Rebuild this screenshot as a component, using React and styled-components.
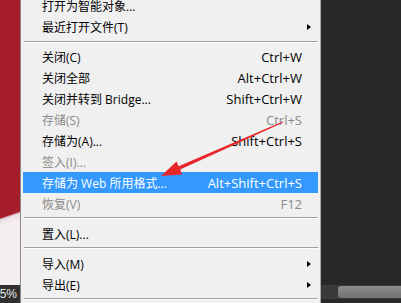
import React from 'react';
import styled, { createGlobalStyle } from 'styled-components';

const GlobalStyle = createGlobalStyle`
    html, body {
        margin: 0;
        padding: 0;
        overflow: hidden;
        background: #282828;
    }
`;

const Screen = styled.div`
    position: relative;
    display: flex;
    width: 401px;
    height: 303px;
    overflow: hidden;
    font-family: "Open Sans", "Noto Sans CJK SC", sans-serif;
    font-size: 12px;
`;

const LeftStrip = styled.div`
    width: 20px;
    display: flex;
    flex-direction: column;
`;
const Photo = styled.div`
    flex: 1;
    background: linear-gradient(161deg, #a51d2b 0 206px, #e9dde3 208px, #f4eef2 214px);
`;
const StatusBar = styled.div`
    height: 18px;
    background: #303030;
    color: #e6e6e6;
    display: flex;
    align-items: center;
    justify-content: flex-end;
    padding-right: 3px;
    font-family: "Liberation Sans", sans-serif;
    font-size: 12px;
`;

const Menu = styled.div`
    width: 299px;
    background: #f0f0f0;
    border-left: 1px solid #8a8a8a;
    border-right: 1px solid #a8a8a8;
`;
const List = styled.div`
    margin-top: -5px;
`;
const Row = styled.div`
    display: flex;
    align-items: center;
    height: 21px;
    margin: 0 2px;
    padding-left: 19px;
    background: ${p => (p.$active ? '#3399ff' : 'transparent')};
    color: ${p => (p.$active ? '#fff' : p.$disabled ? '#8a8a8a' : '#000')};
    white-space: nowrap;
`;
const Label = styled.span`
    flex: 1;
    padding-top: 1px;
`;
const Shortcut = styled.span`
    padding-top: 1px;
    font-size: 13px;
`;
const ArrowCell = styled.span`
    width: 16px;
    display: flex;
    align-items: center;
    padding-left: 5px;
    box-sizing: border-box;
`;
const SubArrow = styled.span`
    width: 0;
    height: 0;
    border-top: 3.5px solid transparent;
    border-bottom: 3.5px solid transparent;
    border-left: 4px solid #000;
`;
const Separator = styled.div`
    height: 9px;
    box-sizing: border-box;
    padding-top: ${p => p.$gap}px;
    margin: 0 2px 0 3px;
    &::after {
        content: '';
        display: block;
        border-top: 1px solid #a0a0a0;
        border-bottom: 1px solid #fdfdfd;
    }
`;

const RightPane = styled.div`
    flex: 1;
    background: #282828;
    display: flex;
    flex-direction: column;
    justify-content: flex-end;
`;
const ScrollTrack = styled.div`
    height: 14px;
    margin-bottom: 4px;
    background: #3a3a3a;
    display: flex;
    align-items: center;
    padding-left: 17px;
`;
const ScrollThumb = styled.div`
    flex: 1;
    height: 12px;
    border-radius: 3px 0 0 3px;
    background: linear-gradient(#8e8e8e, #707070);
`;

const Overlay = styled.svg`
    position: absolute;
    left: 0;
    top: 0;
    pointer-events: none;
`;

const items = [
   { label: '打开为智能对象...' },
   { label: '最近打开文件(T)', sub: true },
   { sep: 4 },
   { label: '关闭(C)', key: 'Ctrl+W' },
   { label: '关闭全部', key: 'Alt+Ctrl+W' },
   { label: '关闭并转到 Bridge...', key: 'Shift+Ctrl+W' },
   { label: '存储(S)', key: 'Ctrl+S', disabled: true },
   { label: '存储为(A)...', key: 'Shift+Ctrl+S' },
   { label: '签入(I)...', disabled: true },
   { label: '存储为 Web 所用格式...', key: 'Alt+Shift+Ctrl+S', active: true },
   { label: '恢复(V)', key: 'F12', disabled: true },
   { sep: 3 },
   { label: '置入(L)...' },
   { sep: 3 },
   { label: '导入(M)', sub: true },
   { label: '导出(E)', sub: true },
   { sep: 3 },
];

const App = () => {
   return (
      <Screen>
         <GlobalStyle/>
         <LeftStrip>
            <Photo/>
            <StatusBar>5%</StatusBar>
         </LeftStrip>
         <Menu>
            <List>
               {items.map((it, i) =>
                  it.sep ? (
                     <Separator key={i} $gap={it.sep}/>
                  ) : (
                     <Row key={i} $active={it.active} $disabled={it.disabled}>
                        <Label>{it.label}</Label>
                        {it.key && <Shortcut>{it.key}</Shortcut>}
                        <ArrowCell>{it.sub && <SubArrow/>}</ArrowCell>
                     </Row>
                  )
               )}
            </List>
         </Menu>
         <RightPane>
            <ScrollTrack>
               <ScrollThumb/>
            </ScrollTrack>
         </RightPane>
         <Overlay width="401" height="303" viewBox="0 0 401 303">
            <polygon
               points="161,176 176.5,161.5 178.6,166.3 282.8,121.4 283.3,122.6 180.2,169.6 182.3,174.4"
               fill="#e8272c"
            />
         </Overlay>
      </Screen>
   );
};

export default App;
